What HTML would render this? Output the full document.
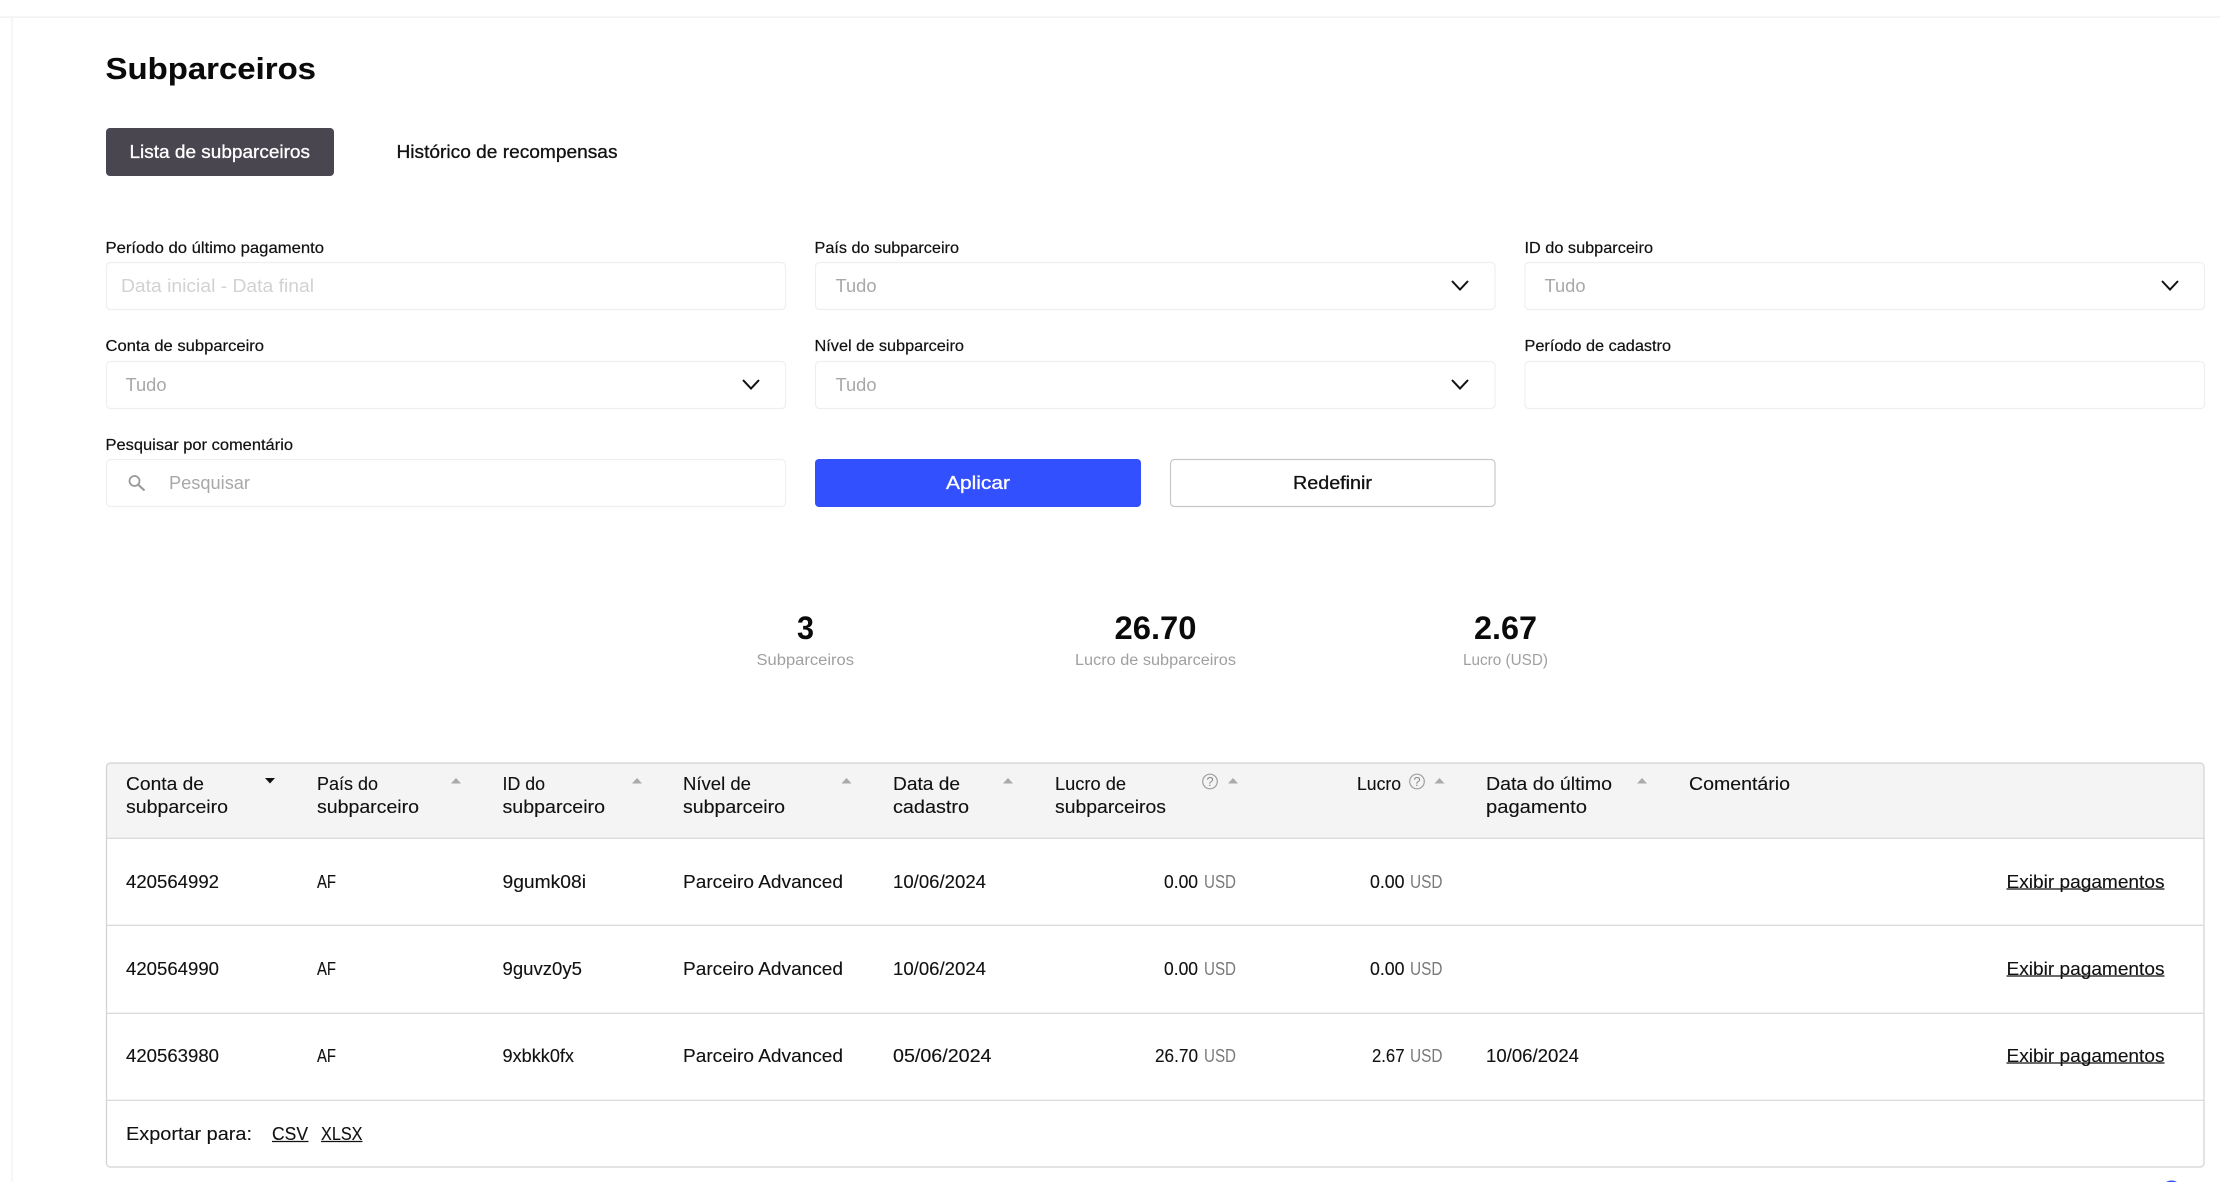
<!DOCTYPE html>
<html lang="pt"><head><meta charset="utf-8"><title>Subparceiros</title>
<style>
html,body{margin:0;padding:0;background:#fff;width:2220px;height:1182px;overflow:hidden}
svg{display:block;font-family:"Liberation Sans",sans-serif}
text{fill:#111;font-size:18px;stroke:#111;stroke-width:.12px}
.l{font-size:16px;stroke-width:.2px}
.h{font-weight:bold;font-size:31px;fill:#0a0a0a;stroke:#0a0a0a;stroke-width:.1px}
.m{stroke:#111;stroke-width:.3px}
.w{fill:#fff;stroke:#fff;stroke-width:.3px}
.g{fill:#a8a8a8;stroke:none}
.p{fill:#d2d2d2;stroke:none}
.u{fill:#7a7a7a;stroke:none}
.s{font-size:15.5px;fill:#a0a0a0;stroke:none}
.n{font-size:32px;font-weight:bold;fill:#0a0a0a;stroke:none}
.b{fill:#fff;stroke:#efefef;stroke-width:1.2}
.c{fill:none;stroke:#111;stroke-width:2}
.r{stroke:#d4d4d4;stroke-width:1.2}
.a{fill:#aaa}
.q{fill:none;stroke:#a0a0a0;stroke-width:1.2}
.qt{font-size:13px;fill:#8a8a8a;stroke:none}
.ul{stroke:#111;stroke-width:1.3}
</style></head><body>
<svg width="2220" height="1182" viewBox="0 0 2220 1182" xmlns="http://www.w3.org/2000/svg">
<rect x="0" y="16.5" width="2220" height="1.2" fill="#eeeeee"/>
<rect x="11.5" y="17" width="1.2" height="1165" fill="#f0f0f0"/>
<text class="h" x="105.5" y="79" textLength="210.500" lengthAdjust="spacingAndGlyphs">Subparceiros</text>
<rect x="106" y="128" width="228" height="48" rx="4" fill="#4a4650"/>
<text class="w" x="129.500" y="158" textLength="180.500" lengthAdjust="spacingAndGlyphs">Lista de subparceiros</text>
<text class="m" x="396.500" y="158" textLength="221" lengthAdjust="spacingAndGlyphs">Histórico de recompensas</text>

<text class="l" x="105.500" y="253" textLength="218.500" lengthAdjust="spacingAndGlyphs">Período do último pagamento</text>
<text class="l" x="814.500" y="253" textLength="144.500" lengthAdjust="spacingAndGlyphs">País do subparceiro</text>
<text class="l" x="1524.500" y="253" textLength="128.500" lengthAdjust="spacingAndGlyphs">ID do subparceiro</text>
<text class="l" x="105.500" y="351" textLength="158.500" lengthAdjust="spacingAndGlyphs">Conta de subparceiro</text>
<text class="l" x="814.500" y="351" textLength="149.500" lengthAdjust="spacingAndGlyphs">Nível de subparceiro</text>
<text class="l" x="1524.500" y="351" textLength="146.500" lengthAdjust="spacingAndGlyphs">Período de cadastro</text>
<text class="l" x="105.500" y="450" textLength="187.500" lengthAdjust="spacingAndGlyphs">Pesquisar por comentário</text>

<rect class="b" x="106.500" y="262.500" width="679" height="47" rx="4"/>
<rect class="b" x="815.500" y="262.500" width="679.500" height="47" rx="4"/>
<rect class="b" x="1525" y="262.500" width="679.500" height="47" rx="4"/>
<rect class="b" x="106.500" y="361.500" width="679" height="47" rx="4"/>
<rect class="b" x="815.500" y="361.500" width="679.500" height="47" rx="4"/>
<rect class="b" x="1525" y="361.500" width="679.500" height="47" rx="4"/>
<rect class="b" x="106.500" y="459.500" width="679" height="47" rx="4"/>

<text class="p" x="121" y="292" textLength="193" lengthAdjust="spacingAndGlyphs">Data inicial - Data final</text>
<text class="g" x="835.500" y="292" textLength="41" lengthAdjust="spacingAndGlyphs">Tudo</text>
<text class="g" x="1544.500" y="292" textLength="41" lengthAdjust="spacingAndGlyphs">Tudo</text>
<text class="g" x="125.500" y="391" textLength="41" lengthAdjust="spacingAndGlyphs">Tudo</text>
<text class="g" x="835.500" y="391" textLength="41" lengthAdjust="spacingAndGlyphs">Tudo</text>
<text class="g" x="169" y="489" textLength="81" lengthAdjust="spacingAndGlyphs">Pesquisar</text>

<polyline class="c" points="1452,281 1460,289.500 1468,281"/>
<polyline class="c" points="2162,281 2170,289.500 2178,281"/>
<polyline class="c" points="743,380 751,388.500 759,380"/>
<polyline class="c" points="1452,380 1460,388.500 1468,380"/>

<circle cx="134.500" cy="481" r="5" fill="none" stroke="#9a9a9a" stroke-width="1.8"/>
<line x1="138.500" y1="485" x2="144.500" y2="490.500" stroke="#9a9a9a" stroke-width="2.2"/>

<rect x="815" y="459" width="326" height="48" rx="4" fill="#3350ff"/>
<text class="w" x="946" y="489" textLength="64" lengthAdjust="spacingAndGlyphs">Aplicar</text>
<rect x="1170.500" y="459.500" width="324.500" height="47" rx="4" fill="#fff" stroke="#c8c8c8" stroke-width="1.2"/>
<text class="m" x="1293" y="489" textLength="79" lengthAdjust="spacingAndGlyphs">Redefinir</text>

<text class="n" x="797" y="639" textLength="17" lengthAdjust="spacingAndGlyphs">3</text>
<text class="s" x="756.500" y="665" textLength="97.500" lengthAdjust="spacingAndGlyphs">Subparceiros</text>
<text class="n" x="1114.500" y="639" textLength="82" lengthAdjust="spacingAndGlyphs">26.70</text>
<text class="s" x="1075" y="665" textLength="161" lengthAdjust="spacingAndGlyphs">Lucro de subparceiros</text>
<text class="n" x="1474" y="639" textLength="63" lengthAdjust="spacingAndGlyphs">2.67</text>
<text class="s" x="1463" y="665" textLength="85" lengthAdjust="spacingAndGlyphs">Lucro (USD)</text>

<path d="M110.500 763H2200a4 4 0 0 1 4 4V838H106.500V767a4 4 0 0 1 4-4z" fill="#f4f4f4"/>
<rect x="106.500" y="763" width="2097.500" height="404" rx="4" fill="none" stroke="#d2d2d2" stroke-width="1.2"/>
<line class="r" x1="106" y1="838.300" x2="2204" y2="838.300"/>
<line class="r" x1="106" y1="925.300" x2="2204" y2="925.300"/>
<line class="r" x1="106" y1="1013.300" x2="2204" y2="1013.300"/>
<line class="r" x1="106" y1="1100.300" x2="2204" y2="1100.300"/>

<text x="126" y="790" textLength="78" lengthAdjust="spacingAndGlyphs">Conta de</text>
<text x="126" y="813" textLength="102" lengthAdjust="spacingAndGlyphs">subparceiro</text>
<text x="317" y="790" textLength="61" lengthAdjust="spacingAndGlyphs">País do</text>
<text x="317" y="813" textLength="102" lengthAdjust="spacingAndGlyphs">subparceiro</text>
<text x="502.500" y="790" textLength="42.500" lengthAdjust="spacingAndGlyphs">ID do</text>
<text x="502.500" y="813" textLength="102.500" lengthAdjust="spacingAndGlyphs">subparceiro</text>
<text x="683" y="790" textLength="68" lengthAdjust="spacingAndGlyphs">Nível de</text>
<text x="683" y="813" textLength="102" lengthAdjust="spacingAndGlyphs">subparceiro</text>
<text x="893" y="790" textLength="67" lengthAdjust="spacingAndGlyphs">Data de</text>
<text x="893" y="813" textLength="76" lengthAdjust="spacingAndGlyphs">cadastro</text>
<text x="1055" y="790" textLength="71" lengthAdjust="spacingAndGlyphs">Lucro de</text>
<text x="1055" y="813" textLength="111" lengthAdjust="spacingAndGlyphs">subparceiros</text>
<text x="1357" y="790" textLength="44" lengthAdjust="spacingAndGlyphs">Lucro</text>
<text x="1486" y="790" textLength="126" lengthAdjust="spacingAndGlyphs">Data do último</text>
<text x="1486" y="813" textLength="101" lengthAdjust="spacingAndGlyphs">pagamento</text>
<text x="1689" y="790" textLength="101" lengthAdjust="spacingAndGlyphs">Comentário</text>

<polygon points="265,778 275,778 270,783.500" fill="#111"/>
<polygon class="a" points="451,783.500 461,783.500 456,778"/>
<polygon class="a" points="632,783.500 642,783.500 637,778"/>
<polygon class="a" points="841.500,783.500 851.500,783.500 846.500,778"/>
<polygon class="a" points="1003,783.500 1013,783.500 1008,778"/>
<polygon class="a" points="1228,783.500 1238,783.500 1233,778"/>
<polygon class="a" points="1434.500,783.500 1444.500,783.500 1439.500,778"/>
<polygon class="a" points="1637,783.500 1647,783.500 1642,778"/>

<circle class="q" cx="1210" cy="781.500" r="7.300"/>
<text class="qt" x="1210" y="786" text-anchor="middle">?</text>
<circle class="q" cx="1417" cy="781.500" r="7.300"/>
<text class="qt" x="1417" y="786" text-anchor="middle">?</text>

<text x="126" y="888" textLength="93" lengthAdjust="spacingAndGlyphs">420564992</text>
<text x="317" y="888" textLength="19" lengthAdjust="spacingAndGlyphs">AF</text>
<text x="502.500" y="888" textLength="83.500" lengthAdjust="spacingAndGlyphs">9gumk08i</text>
<text x="683" y="888" textLength="160" lengthAdjust="spacingAndGlyphs">Parceiro Advanced</text>
<text x="893" y="888" textLength="93" lengthAdjust="spacingAndGlyphs">10/06/2024</text>
<text x="1164" y="888" textLength="34" lengthAdjust="spacingAndGlyphs">0.00</text>
<text class="u" x="1204" y="888" textLength="32" lengthAdjust="spacingAndGlyphs">USD</text>
<text x="1370" y="888" textLength="34.500" lengthAdjust="spacingAndGlyphs">0.00</text>
<text class="u" x="1410" y="888" textLength="32.500" lengthAdjust="spacingAndGlyphs">USD</text>
<text x="2006.500" y="888" textLength="158" lengthAdjust="spacingAndGlyphs">Exibir pagamentos</text>
<line class="ul" x1="2006.500" y1="889" x2="2164.500" y2="889"/>

<text x="126" y="975" textLength="93" lengthAdjust="spacingAndGlyphs">420564990</text>
<text x="317" y="975" textLength="19" lengthAdjust="spacingAndGlyphs">AF</text>
<text x="502.500" y="975" textLength="79.500" lengthAdjust="spacingAndGlyphs">9guvz0y5</text>
<text x="683" y="975" textLength="160" lengthAdjust="spacingAndGlyphs">Parceiro Advanced</text>
<text x="893" y="975" textLength="93" lengthAdjust="spacingAndGlyphs">10/06/2024</text>
<text x="1164" y="975" textLength="34" lengthAdjust="spacingAndGlyphs">0.00</text>
<text class="u" x="1204" y="975" textLength="32" lengthAdjust="spacingAndGlyphs">USD</text>
<text x="1370" y="975" textLength="34.500" lengthAdjust="spacingAndGlyphs">0.00</text>
<text class="u" x="1410" y="975" textLength="32.500" lengthAdjust="spacingAndGlyphs">USD</text>
<text x="2006.500" y="975" textLength="158" lengthAdjust="spacingAndGlyphs">Exibir pagamentos</text>
<line class="ul" x1="2006.500" y1="976" x2="2164.500" y2="976"/>

<text x="126" y="1062" textLength="93" lengthAdjust="spacingAndGlyphs">420563980</text>
<text x="317" y="1062" textLength="19" lengthAdjust="spacingAndGlyphs">AF</text>
<text x="502.500" y="1062" textLength="71.500" lengthAdjust="spacingAndGlyphs">9xbkk0fx</text>
<text x="683" y="1062" textLength="160" lengthAdjust="spacingAndGlyphs">Parceiro Advanced</text>
<text x="893" y="1062" textLength="98.500" lengthAdjust="spacingAndGlyphs">05/06/2024</text>
<text x="1155" y="1062" textLength="43" lengthAdjust="spacingAndGlyphs">26.70</text>
<text class="u" x="1204" y="1062" textLength="32" lengthAdjust="spacingAndGlyphs">USD</text>
<text x="1372" y="1062" textLength="32.500" lengthAdjust="spacingAndGlyphs">2.67</text>
<text class="u" x="1410" y="1062" textLength="32.500" lengthAdjust="spacingAndGlyphs">USD</text>
<text x="1486" y="1062" textLength="93" lengthAdjust="spacingAndGlyphs">10/06/2024</text>
<text x="2006.500" y="1062" textLength="158" lengthAdjust="spacingAndGlyphs">Exibir pagamentos</text>
<line class="ul" x1="2006.500" y1="1063" x2="2164.500" y2="1063"/>

<text x="126" y="1140" textLength="126" lengthAdjust="spacingAndGlyphs">Exportar para:</text>
<text x="272" y="1140" textLength="36" lengthAdjust="spacingAndGlyphs">CSV</text>
<line class="ul" x1="272" y1="1141.500" x2="308.500" y2="1141.500"/>
<text x="321" y="1140" textLength="41.500" lengthAdjust="spacingAndGlyphs">XLSX</text>
<line class="ul" x1="321" y1="1141.500" x2="362.500" y2="1141.500"/>

<ellipse cx="2171.500" cy="1190" rx="10" ry="9.500" fill="#3350ff"/>
</svg>
</body></html>
